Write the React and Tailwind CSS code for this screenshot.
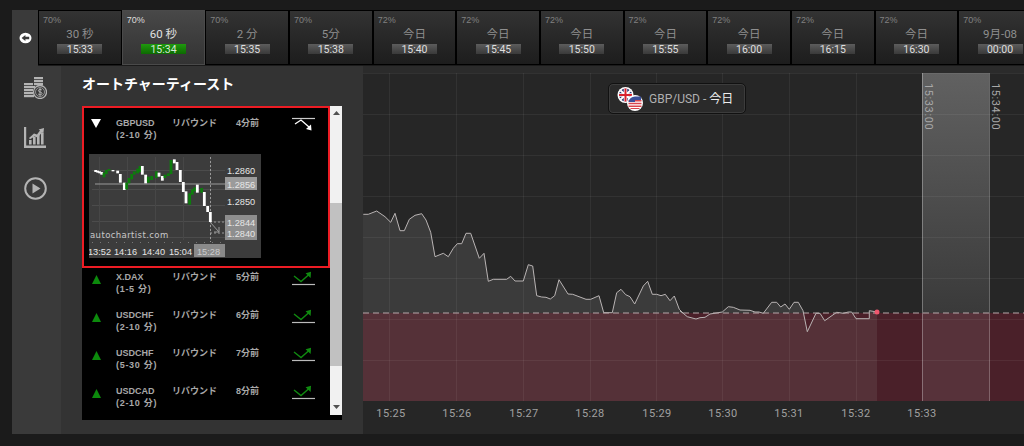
import React from 'react';

const SANS = "font-['Liberation_Sans','Noto_Sans_CJK_JP',sans-serif]";

const TABS = [
  { pct: '70%', label: '30 秒', time: '15:33' },
  { pct: '70%', label: '60 秒', time: '15:34', active: true },
  { pct: '70%', label: '2 分', time: '15:35' },
  { pct: '70%', label: '5分', time: '15:38' },
  { pct: '72%', label: '今日', time: '15:40' },
  { pct: '72%', label: '今日', time: '15:45' },
  { pct: '72%', label: '今日', time: '15:50' },
  { pct: '72%', label: '今日', time: '15:55' },
  { pct: '72%', label: '今日', time: '16:00' },
  { pct: '72%', label: '今日', time: '16:15' },
  { pct: '72%', label: '今日', time: '16:30' },
  { pct: '70%', label: '9月-08', time: '00:00' },
];

const ROWS = [
  { pair: 'X.DAX', span: '(1-5 分)', ago: '5分前' },
  { pair: 'USDCHF', span: '(2-10 分)', ago: '6分前' },
  { pair: 'USDCHF', span: '(5-30 分)', ago: '7分前' },
  { pair: 'USDCAD', span: '(2-10 分)', ago: '8分前' },
];

// price line, read off the chart (page coordinates x 3 from two crops)
const LEFT = [[10,43],[25,43],[50,33],[75,50],[92,67],[105,40],[120,92],[133,92],[148,58],[165,46],[185,41],[198,60],[212,97],[225,170],[250,160],[265,170],[280,145],[292,131],[305,131],[318,100],[332,100],[358,175],[372,160],[385,244],[400,238],[440,238],[452,229],[465,243],[490,243],[505,194],[518,198],[530,287],[545,291],[558,292],[571,297],[584,287],[597,239],[624,282],[638,283],[678,298],[692,298],[717,287],[731,338],[757,338],[770,278],[783,268],[797,284],[810,290],[824,312],[850,258],[863,244],[877,283],[890,283],[903,287],[916,283],[930,302],[943,288],[958,328],[970,340]];
const RIGHT = [[0,92],[22,110],[48,117],[60,113],[75,112],[90,102],[127,96],[145,80],[160,82],[180,90],[210,91],[225,96],[237,96],[250,100],[275,67],[290,67],[302,81],[315,72],[328,88],[342,67],[355,67],[369,92],[382,155],[408,100],[420,100],[434,122],[470,97],[490,100],[505,96],[515,96],[528,116],[568,116],[568,92],[592,96]];
const LINE = [
  ...LEFT.map(([x, y]) => [360 + x / 3, 200 + y / 3]),
  ...RIGHT.map(([x, y]) => [680 + x / 3, 280 + y / 3]),
];
const linePts = LINE.map(([x, y]) => `${x.toFixed(1)},${y.toFixed(1)}`).join(' ');
const BASE = 313;
const areaPts = `363,${BASE} 363,214 ${linePts} 877,${BASE}`;

const GRID_X = [389.5, 456.5, 523.5, 590.5, 656.5, 722.5, 789.5, 856.5];
const GRID_Y = [73.5, 114.5, 155.5, 196.5, 237.5, 278.5, 319.5, 360.5];
const AXIS = [['15:25', 391], ['15:26', 457], ['15:27', 524], ['15:28', 590], ['15:29', 657], ['15:30', 723], ['15:31', 789], ['15:32', 856], ['15:33', 922]];

// mini chart candles: [x, top, bottom, green?] in crop pixels
const CANDLES = [
  [32,60,66],[38,62,68],[44,64,70],[50,66,74],[57,68,82,1],[64,60,72,1],[72,57,62,1],[84,60,64],[98,62,70],[106,72,98],[118,98,120],[125,98,118,1],[132,84,100,1],[140,72,88,1],[148,64,74,1],[158,56,70,1],[165,48,66,1],[172,48,74],[182,74,100],[190,80,98,1],[200,78,90,1],[214,64,84,1],[222,68,80],[232,78,92],[240,74,84,1],[250,70,78,1],[258,30,72,1],[268,28,40],[276,36,60],[286,60,96],[295,96,126],[303,124,160],[314,130,164,1],[322,118,134,1],[329,112,124,1],[337,104,128],[350,114,128,1],[358,126,168],[368,168,186],[376,186,216],
];

const BackIcon = () => (
  <svg width="13" height="12" viewBox="0 0 13 12">
    <ellipse cx="6.500" cy="6" rx="6" ry="5.200" fill="#fff" />
    <path d="M2.600 6 6.400 3v1.800h3.800v2.400H6.400V9z" fill="#3a3a3a" />
  </svg>
);

const CoinsIcon = () => (
  <svg width="23" height="22" viewBox="0 0 23 22" fill="#b4b4b4">
    <rect x="10" y="0" width="9" height="2.200" />
    <rect x="10" y="3" width="9" height="2.200" />
    <rect x="10" y="6" width="9" height="2.200" />
    <rect x="0" y="6" width="9" height="2.200" />
    <rect x="0" y="9" width="11" height="2.200" />
    <rect x="0" y="12" width="9" height="2.200" />
    <rect x="0" y="15" width="9" height="2.200" />
    <rect x="0" y="18" width="10" height="2.200" />
    <circle cx="16" cy="15" r="6.500" fill="#3a3a3a" stroke="#b4b4b4" strokeWidth="1.300" />
    <circle cx="16" cy="15" r="4.500" fill="none" stroke="#b4b4b4" strokeWidth="0.700" />
    <path d="M17.800 13c-.6-.8-3.400-1-3.400.7s3.600 1 3.600 2.700-3 1.500-3.800.6M16 11.200v7.600" fill="none" stroke="#b4b4b4" strokeWidth="1" />
  </svg>
);

const BarsIcon = () => (
  <svg width="22" height="21" viewBox="0 0 22 21" fill="#b4b4b4">
    <path d="M0 0h2.200v18.600H22V21H0z" />
    <rect x="5" y="13" width="2.600" height="4.500" />
    <rect x="9" y="10" width="2.600" height="7.500" />
    <rect x="13" y="8" width="2.600" height="9.500" />
    <rect x="17" y="6" width="2.600" height="11.500" />
    <path d="M5 11l5-4.500 3 1 3-4-1.400-1L20 1l-.6 5.400-1.400-1-4.400 5-3-1L6 12.200z" />
  </svg>
);

const PlayIcon = () => (
  <svg width="23" height="23" viewBox="0 0 23 23">
    <circle cx="11.500" cy="11.500" r="10.300" fill="none" stroke="#b4b4b4" strokeWidth="2" />
    <path d="M8.500 6.500v10l8-5z" fill="#b4b4b4" />
  </svg>
);

const DownTrend = () => (
  <svg width="23" height="15" viewBox="0 0 23 15" fill="none">
    <path d="M0 1.500h23" stroke="#ccc" strokeWidth="1.200" />
    <path d="M3 7l6-4 8 7" stroke="#fff" strokeWidth="1.300" />
    <path d="M19.500 13.500l-.5-6-5 4.500z" fill="#fff" />
  </svg>
);

const UpTrend = () => (
  <svg width="23" height="15" viewBox="0 0 23 15" fill="none">
    <path d="M0 13.500h23" stroke="#bbb" strokeWidth="1.200" />
    <path d="M2 5l7 5.500 8-7" stroke="#108a10" strokeWidth="1.400" />
    <path d="M19 .8l-.4 6.200-5-4.700z" fill="#108a10" />
  </svg>
);

const Flags = () => (
  <svg width="26" height="24" viewBox="0 0 26 24">
    <circle cx="8.500" cy="8" r="8" fill="#fff" />
    <circle cx="8.500" cy="8" r="6.500" fill="#27336f" />
    <path d="M3.500 3.500l10 9M13.500 3.500l-10 9" stroke="#fff" strokeWidth="2" />
    <path d="M8.500 1.500v13M2 8h13" stroke="#fff" strokeWidth="3.500" />
    <path d="M8.500 1.500v13M2 8h13" stroke="#d8222e" strokeWidth="2" />
    <circle cx="18" cy="16" r="8" fill="#fff" />
    <path d="M11.500 13h13v1.400h-13zM11.500 15.800h13v1.400h-13zM11.500 18.600h13V20h-13zM13.500 21h9v1h-9z" fill="#d8454f" />
    <path d="M11.500 15a6.500 6.500 0 0 1 6.500-5.500h6v3.500h-6v2z" fill="#3a4f9a" />
  </svg>
);

const Tab = ({ tab }) => (
  <div
    className={`relative h-[55px] w-[83.67px] shrink-0 border flex flex-col items-center ${
      tab.active
        ? 'border-[#4a4a4a] bg-gradient-to-b from-[#484848] to-[#333333]'
        : 'border-black bg-gradient-to-b from-[#333333] to-[#1d1d1d]'
    }`}
  >
    <span className={`absolute left-[4px] top-[3px] text-[9px] leading-[12px] ${tab.active ? 'text-[#dddddd]' : 'text-[#808080]'}`}>{tab.pct}</span>
    <span className={`mt-[15px] h-[17px] text-[11.500px] leading-[17px] font-['Roboto','Noto_Sans_CJK_JP',sans-serif] ${tab.active ? 'text-[#e0e0e0]' : 'text-[#8f8f8f]'}`}>{tab.label}</span>
    <span
      className={`mt-[1px] h-[10px] w-[45px] text-center text-[10.500px] leading-[11px] font-['Roboto',sans-serif] ${
        tab.active
          ? 'bg-gradient-to-b from-[#1f9a0e] to-[#0d6a02] text-[#d8e8d8]'
          : 'bg-gradient-to-b from-[#5c5c5c] to-[#3a3a3a] text-[#dedede]'
      }`}
    >
      {tab.time}
    </span>
  </div>
);

const SignalRow = ({ row }) => (
  <div className="flex h-[38px] pl-[8px] text-[9px] leading-[12px] font-bold text-[#a8a8a8]">
    <div className="w-[26px] pl-[2px] pt-[4px]">
      <svg width="9" height="9" viewBox="0 0 9 9"><path d="M4.500 0 9 9H0z" fill="#0c8a0c" /></svg>
    </div>
    <div className="w-[56px]">
      <div>{row.pair}</div>
      <div className="tracking-[0.700px]">{row.span}</div>
    </div>
    <div className="w-[64px]">リバウンド</div>
    <div className="w-[56px]">{row.ago}</div>
    <UpTrend />
  </div>
);

const MiniChart = () => (
  <svg width="172" height="104" viewBox="0 0 172 104" className="block">
    <rect width="172" height="104" fill="#3c3c3c" />
    {[16, 35, 51, 67, 83].map((y) => <path key={y} d={`M3 ${y}.5H136`} stroke="#4c4c4c" />)}
    {[10, 38, 66, 94, 121].map((x) => <path key={x} d={`M${x}.5 3V86`} stroke="#474747" />)}
    <path d="M6 30H136" stroke="#9a9a9a" strokeWidth="1" />
    <path d="M121.500 3V88" stroke="#999" strokeDasharray="2 2" />
    <path d="M121 68h16M121 79h16" stroke="#999" strokeDasharray="2 2" />
    <path d="M121 68l9 10M130 78v-5M130 78h-5" stroke="#999" fill="none" />
    {CANDLES.map(([x, t, b, green]) => (
      <rect key={x} x={x / 3 - 4 - 1.4} y={t / 3 - 4} width="2.800" height={(b - t) / 3} fill={green ? '#0d7d0d' : '#ffffff'} />
    ))}
    <rect x="136" y="23" width="32" height="13" fill="#9b9b9b" />
    <rect x="136" y="61" width="32" height="25" fill="#8e8e8e" />
    <rect x="105" y="90" width="31" height="13" fill="#8a8a8a" />
    <g fill="#e6e6e6" fontSize="9.200" fontFamily="Liberation Sans, sans-serif">
      <text x="138" y="20">1.2860</text>
      <text x="138" y="33.500">1.2856</text>
      <text x="138" y="51">1.2850</text>
      <text x="138" y="72">1.2844</text>
      <text x="138" y="83">1.2840</text>
      <text x="-1" y="101">13:52</text>
      <text x="25" y="101">14:16</text>
      <text x="53" y="101">14:40</text>
      <text x="80" y="101">15:04</text>
      <text x="108" y="101" fill="#cccccc">15:28</text>
    </g>
    <text x="1" y="84" fill="#c8c8c8" fontSize="8.500" letterSpacing="0.400" fontFamily="DejaVu Sans, sans-serif">autochartist.com</text>
    <path d="M3 88.500H138" stroke="#777" strokeDasharray="1 7" />
  </svg>
);

const Chart = () => (
  <svg width="661" height="368" viewBox="363 66 661 368" className="block">
    <defs>
      <linearGradient id="hl" x1="0" y1="0" x2="0" y2="1">
        <stop offset="0" stopColor="#616161" />
        <stop offset="1" stopColor="#3a3a3a" />
      </linearGradient>
      <clipPath id="above"><rect x="363" y="66" width="661" height={BASE - 66} /></clipPath>
      <clipPath id="below"><rect x="363" y={BASE} width="661" height="90" /></clipPath>
    </defs>
    <rect x="363" y="66" width="661" height="368" fill="#262626" />
    <rect x="363" y="66" width="661" height="7" fill="#2b2b2b" />
    <rect x="922" y="73" width="67" height={BASE - 73} fill="url(#hl)" />
    <polygon points={areaPts} fill="#3b3b3b" clipPath="url(#above)" />
    <rect x="363" y={BASE} width="514" height="88" fill="#553138" />
    <rect x="877" y={BASE} width="147" height="88" fill="#4a2029" />
    <rect x="922" y={BASE} width="67" height="88" fill="#57323a" />
    <polygon points={areaPts} fill="#4a2029" clipPath="url(#below)" />
    <g stroke="#ffffff" strokeOpacity="0.06">
      {GRID_X.map((x) => <path key={x} d={`M${x} 73V401`} />)}
      {GRID_Y.map((y) => <path key={y} d={`M363 ${y}H1024`} />)}
    </g>
    <path d="M922.500 73V401M989.500 73V401" stroke="#ffffff" strokeOpacity="0.3" />
    <polyline points={linePts} fill="none" stroke="#b9b4b4" strokeWidth="1" />
    <path d={`M363 ${BASE}H1024`} stroke="#b8a8aa" strokeWidth="1.200" strokeDasharray="6 4" />
    <circle cx="877" cy="312" r="2.500" fill="#f0566e" />
    <g fill="#a0a0a0" fontSize="11" fontFamily="Roboto, sans-serif" textAnchor="middle" letterSpacing="0.400">
      {AXIS.map(([t, x]) => <text key={t} x={x} y="417">{t}</text>)}
    </g>
    <g fill="#a8a8a8" fontSize="11" fontFamily="Roboto, sans-serif" letterSpacing="0.600">
      <text transform="translate(925 83) rotate(90)">15:33:00</text>
      <text transform="translate(992 83) rotate(90)">15:34:00</text>
    </g>
  </svg>
);

export default function App() {
  return (
    <div className={`h-[446px] w-[1024px] overflow-hidden bg-[#1b1b1b] pl-[12px] pt-[10px] ${SANS}`}>
      {/* expiry tabs */}
      <div className="flex h-[56px] overflow-hidden">
        <div className="flex w-[26px] shrink-0 items-center justify-center bg-[#3a3a3a]">
          <BackIcon />
        </div>
        {TABS.map((tab) => <Tab key={tab.time} tab={tab} />)}
      </div>

      <div className="flex h-[368px]">
        {/* icon rail */}
        <div className="flex w-[50px] shrink-0 flex-col items-start border-r border-[#333] bg-[#3a3a3a] pl-[12px] pt-[11px]">
          <CoinsIcon />
          <div className="mt-[28px]"><BarsIcon /></div>
          <div className="mt-[29px]"><PlayIcon /></div>
        </div>

        {/* auto chartist panel */}
        <div className="w-[301px] shrink-0 bg-[#333333] pl-[20px]">
          <h2 className="h-[40px] pt-[8px] text-[14px] font-bold leading-[20px] text-white">オートチャーティースト</h2>
          <div className="flex h-[314px] w-[260px] bg-black">
            <div className="w-[248px] shrink-0">
              <div className="h-[162px] border-2 border-[#ed1c24]">
                <div className="flex h-[46px] pl-[6px] pt-[9px] text-[9px] font-bold leading-[12px] text-[#a8a8a8]">
                  <div className="w-[26px] pl-[1px] pt-[2px]">
                    <svg width="10" height="9" viewBox="0 0 10 9"><path d="M0 0h10L5 9z" fill="#fff" /></svg>
                  </div>
                  <div className="w-[56px]">
                    <div>GBPUSD</div>
                    <div className="tracking-[0.700px]">(2-10 分)</div>
                  </div>
                  <div className="w-[64px]">リバウンド</div>
                  <div className="w-[56px]">4分前</div>
                  <DownTrend />
                </div>
                <div className="pl-[5px]">
                  <MiniChart />
                </div>
              </div>
              <div className="pt-[3px]">
                {ROWS.map((row) => <SignalRow key={row.ago} row={row} />)}
              </div>
            </div>
            {/* scrollbar */}
            <div className="flex h-[309px] w-[12px] flex-col items-center bg-[#f1f1f1]">
              <svg width="7" height="4" viewBox="0 0 7 4" className="mt-[5px]"><path d="M3.500 0 7 4H0z" fill="#505050" /></svg>
              <div className="mt-[88px] h-[163px] w-full bg-[#c1c1c1]" />
              <svg width="7" height="4" viewBox="0 0 7 4" className="mt-[39px]"><path d="M3.500 4 7 0H0z" fill="#505050" /></svg>
            </div>
          </div>
        </div>

        {/* price chart */}
        <div className="relative w-[661px] shrink-0">
          <Chart />
          <div className="absolute left-[245px] top-[17px] flex h-[31px] w-[138px] items-center gap-[6px] rounded-[5px] border border-[#111] bg-[#2a2a2a] pl-[8px] text-[12px] text-[#b0b0b0] shadow-[inset_0_0_0_1px_#3c3c3c] font-['Roboto','Noto_Sans_CJK_JP',sans-serif]">
            <Flags />
            <span>GBP/USD - <span className="text-[#eeeeee]">今日</span></span>
          </div>
        </div>
      </div>
    </div>
  );
}
